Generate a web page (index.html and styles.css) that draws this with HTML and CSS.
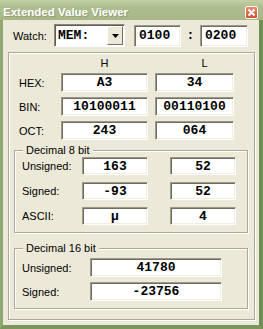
FILE: index.html
```html
<!DOCTYPE html>
<html lang="en">
<head>
  <meta charset="UTF-8" />
  <title>Extended Value Viewer</title>
  <link rel="stylesheet" href="styles.css">
</head>
<body>
  <div class="window">
    <div class="titlebar">
      <span class="title">Extended Value Viewer</span>
      <span class="close">
        <svg width="13" height="13" viewBox="0 0 13 13">
          <path d="M3.5 3.5 L9.5 9.5 M9.5 3.5 L3.5 9.5" stroke="#fff" stroke-width="2" />
        </svg>
      </span>
    </div>

    <div class="client">
      <div class="watch-row">
        <span class="watch-label">Watch:</span>
        <div class="combo">
          <span class="combo-value">MEM:</span>
          <span class="combo-btn">
            <svg width="7" height="4" viewBox="0 0 7 4"><path d="M0 0 H7 L3.5 4 Z" fill="#000" /></svg>
          </span>
        </div>
        <div class="edit addr">0100</div>
        <span class="colon">:</span>
        <div class="edit addr">0200</div>
      </div>

      <div class="panel">
        <div class="head-row">
          <span class="head-h">H</span>
          <span class="head-l">L</span>
        </div>
        <div class="row">
          <span class="lbl">HEX:</span>
          <div class="edit val-h">A3</div>
          <div class="edit val-l">34</div>
        </div>
        <div class="row">
          <span class="lbl">BIN:</span>
          <div class="edit val-h">10100011</div>
          <div class="edit val-l">00110100</div>
        </div>
        <div class="row">
          <span class="lbl">OCT:</span>
          <div class="edit val-h">243</div>
          <div class="edit val-l">064</div>
        </div>

        <div class="group g8">
          <span class="legend">Decimal 8 bit</span>
          <div class="grow">
            <span class="glbl">Unsigned:</span>
            <div class="edit d8">163</div>
            <div class="edit d8 d8-r">52</div>
          </div>
          <div class="grow">
            <span class="glbl">Signed:</span>
            <div class="edit d8">-93</div>
            <div class="edit d8 d8-r">52</div>
          </div>
          <div class="grow">
            <span class="glbl">ASCII:</span>
            <div class="edit d8">µ</div>
            <div class="edit d8 d8-r">4</div>
          </div>
        </div>

        <div class="group g16">
          <span class="legend">Decimal 16 bit</span>
          <div class="grow">
            <span class="glbl">Unsigned:</span>
            <div class="edit d16">41780</div>
          </div>
          <div class="grow">
            <span class="glbl">Signed:</span>
            <div class="edit d16">-23756</div>
          </div>
        </div>
      </div>
    </div>
  </div>
</body>
</html>
```

FILE: styles.css
```css
body {
  margin: 0;
  font-family: "Liberation Sans", Arial, sans-serif;
  font-size: 11px;
  color: #000;
  background: #ece9d8;
}

.window {
  width: 263px;
  height: 329px;
  display: flex;
  flex-direction: column;
}

.titlebar {
  height: 20px;
  box-sizing: border-box;
  display: flex;
  align-items: flex-start;
  justify-content: space-between;
  padding: 6px 5px 0 3px;
  background: linear-gradient(#c4d0a6, #aebd8f 35%, #a7b787);
}

.title {
  color: #fff;
  font-weight: bold;
  font-size: 11.5px;
  line-height: 13px;
  text-shadow: 1px 1px 0 #8f9f72;
}

.close {
  width: 13px;
  height: 13px;
  box-sizing: border-box;
  border: 1px solid #fff;
  border-radius: 2px;
  background: linear-gradient(#e98a6e, #d5512e);
  display: flex;
  align-items: center;
  justify-content: center;
}

.close svg {
  margin: -1px;
}

.client {
  flex: 1;
  background: #ece9d8;
  border-left: 3px solid #8fa872;
  border-right: 4px solid #6f8d56;
  border-bottom: 4px solid #7a965d;
}

/* watch row */
.watch-row {
  display: flex;
  align-items: center;
  height: 23px;
  margin-top: 4px;
  padding-left: 10px;
}

.watch-label {
  width: 41px;
}

.combo {
  width: 71px;
  height: 23px;
  box-sizing: border-box;
  display: flex;
  align-items: center;
  justify-content: space-between;
  background: #fff;
  border: 1px solid;
  border-color: #8a877a #fff #fff #8a877a;
  box-shadow: inset 1px 1px 0 #5f5d53;
  padding: 1px 1px 1px 3px;
}

.combo-value,
.edit,
.colon {
  font-family: "Liberation Mono", "DejaVu Sans Mono", monospace;
  font-weight: bold;
  font-size: 13px;
}

.combo-btn {
  width: 16px;
  height: 19px;
  box-sizing: border-box;
  display: flex;
  align-items: center;
  justify-content: center;
  background: #ece9d8;
  border: 1px solid;
  border-color: #fff #716f64 #716f64 #fff;
}

.edit {
  height: 19px;
  box-sizing: border-box;
  display: flex;
  align-items: center;
  justify-content: center;
  background: #fff;
  border: 1px solid;
  border-color: #9d9a8c #fff #fff #9d9a8c;
  box-shadow: inset 1px 1px 0 #6f6d62, inset -1px -1px 0 #f1efe2;
}

.addr {
  height: 22px;
  justify-content: flex-start;
  padding-left: 4px;
}

.watch-row .addr:nth-of-type(2) {
  margin-left: 9px;
  width: 47px;
}

.watch-row .addr:last-child {
  width: 48px;
}

.colon {
  width: 19px;
  text-align: center;
}

/* main panel */
.panel {
  margin: 5px 0 0 5px;
  width: 247px;
  height: 268px;
  box-sizing: border-box;
  border: 1px solid #aca899;
  box-shadow: inset 1px 1px 0 #fff, 1px 1px 0 #fff;
  padding: 3px 0 0 10px;
}

.head-row {
  display: flex;
  height: 14px;
  line-height: 14px;
  margin-bottom: 3px;
}

.head-h {
  margin-left: 42px;
  width: 87px;
  text-align: center;
}

.head-l {
  margin-left: 7px;
  width: 99px;
  text-align: center;
}

.row {
  display: flex;
  align-items: center;
  margin-bottom: 5px;
}

.lbl {
  width: 42px;
}

.val-h {
  width: 87px;
}

.val-l {
  width: 79px;
  margin-left: 7px;
}

/* group boxes */
.group {
  position: relative;
  margin-left: -5px;
  width: 234px;
  box-sizing: border-box;
  border: 1px solid #aca899;
  box-shadow: inset 1px 1px 0 #fff, 1px 1px 0 #fff;
}

.legend {
  position: absolute;
  top: -8px;
  left: 8px;
  padding: 0 3px;
  background: #ece9d8;
  line-height: 14px;
}

.g8 {
  margin-top: 10px;
  padding: 6px 0 7px 7px;
}

.g8 .grow {
  display: flex;
  align-items: center;
  margin-bottom: 7px;
}

.g8 .grow:last-child {
  margin-bottom: 0;
}

.g8 .glbl {
  width: 60px;
}

.d8 {
  width: 66px;
  height: 18px;
}

.d8-r {
  margin-left: 22px;
}

.g16 {
  margin-top: 15px;
  padding: 9px 0 7px 7px;
}

.g16 .grow {
  display: flex;
  align-items: center;
  margin-bottom: 5px;
}

.g16 .grow:last-child {
  margin-bottom: 0;
}

.g16 .glbl {
  width: 68px;
}

.d16 {
  width: 132px;
}
```
